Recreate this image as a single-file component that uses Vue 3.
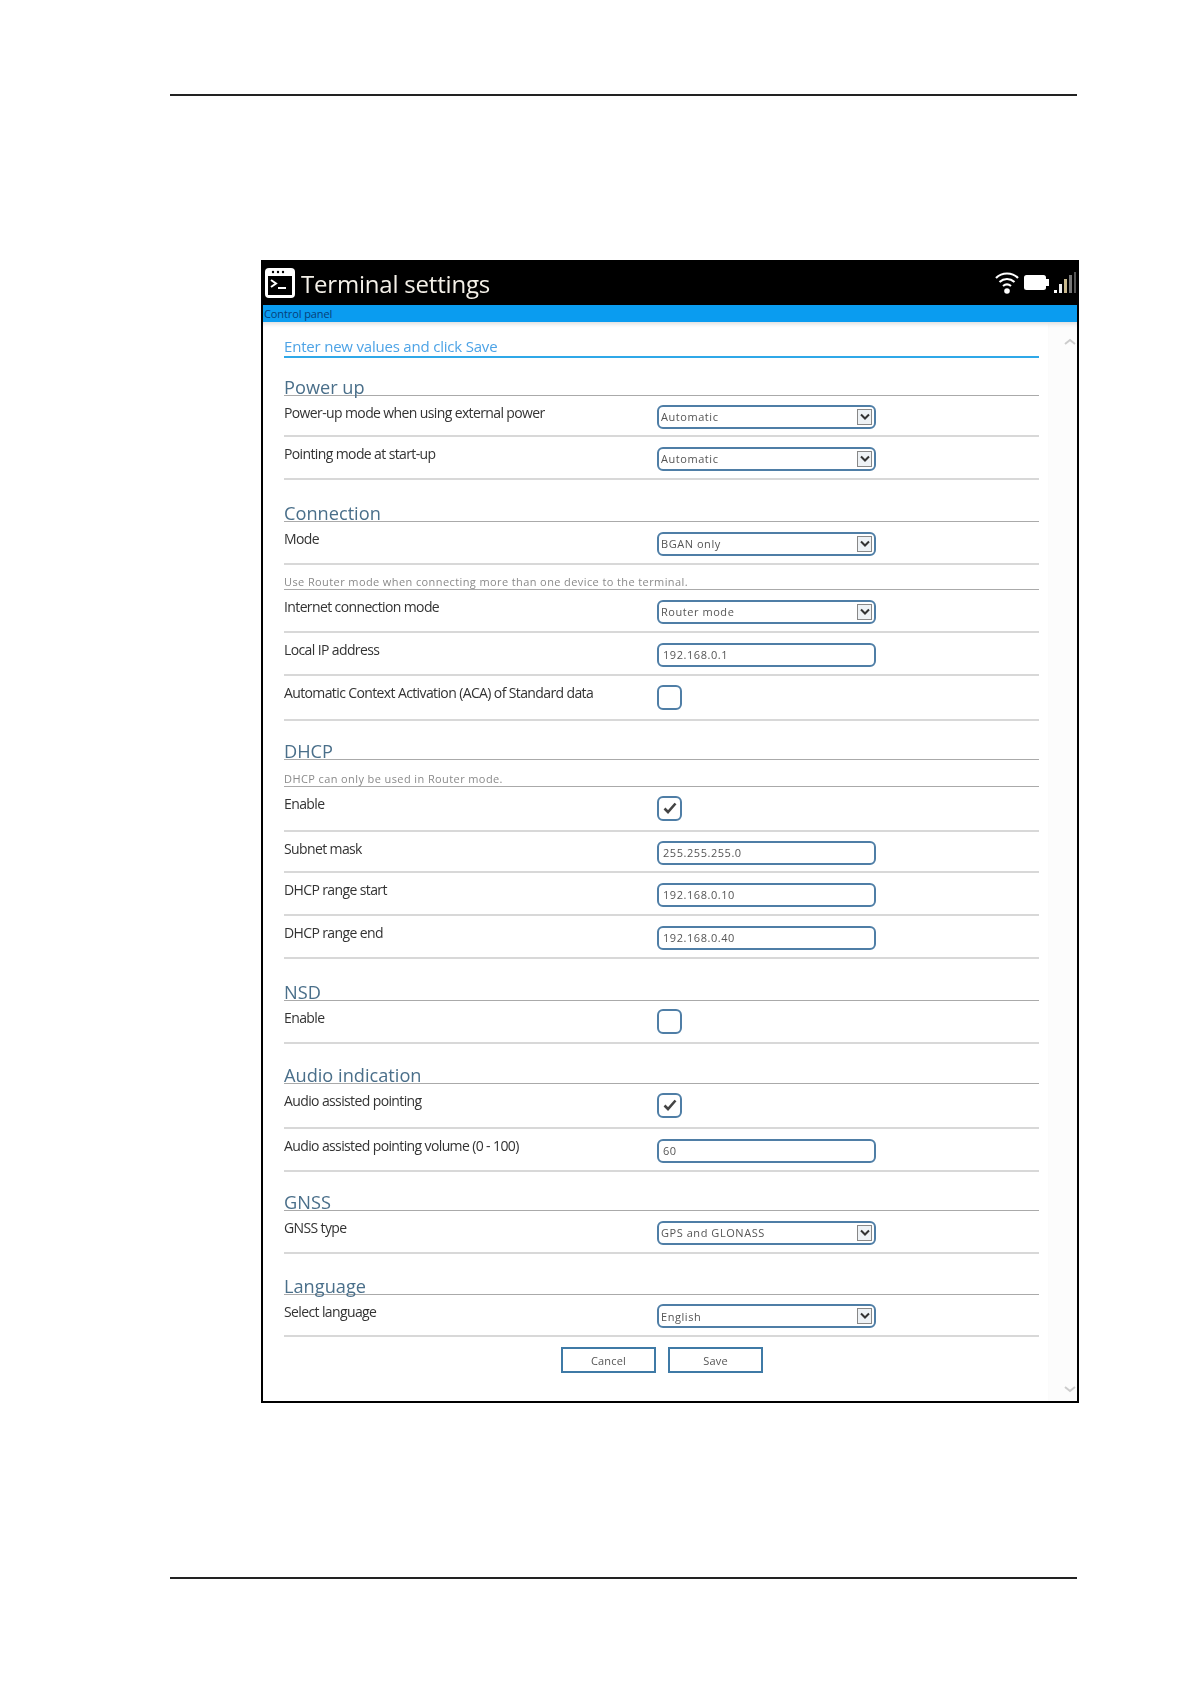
<script setup>
const sections = [
  { title: 'Power up', h: 38, rows: [
    { label: 'Power-up mode when using external power', type: 'select', value: 'Automatic', h: 41 },
    { label: 'Pointing mode at start-up', type: 'select', value: 'Automatic', h: 43 }
  ] },
  { title: 'Connection', h: 42, rows: [
    { label: 'Mode', type: 'select', value: 'BGAN only', h: 43 },
    { hint: 'Use Router mode when connecting more than one device to the terminal.', h: 25 },
    { label: 'Internet connection mode', type: 'select', value: 'Router mode', h: 43 },
    { label: 'Local IP address', type: 'input', value: '192.168.0.1', h: 43 },
    { label: 'Automatic Context Activation (ACA) of Standard data', type: 'check', value: false, h: 45 }
  ] },
  { title: 'DHCP', h: 39, rows: [
    { hint: 'DHCP can only be used in Router mode.', h: 27 },
    { label: 'Enable', type: 'check', value: true, h: 45 },
    { label: 'Subnet mask', type: 'input', value: '255.255.255.0', h: 41 },
    { label: 'DHCP range start', type: 'input', value: '192.168.0.10', h: 43 },
    { label: 'DHCP range end', type: 'input', value: '192.168.0.40', h: 43 }
  ] },
  { title: 'NSD', h: 42, rows: [
    { label: 'Enable', type: 'check', value: false, h: 43 }
  ] },
  { title: 'Audio indication', h: 40, rows: [
    { label: 'Audio assisted pointing', type: 'check', value: true, h: 45 },
    { label: 'Audio assisted pointing volume (0 - 100)', type: 'input', value: '60', h: 43 }
  ] },
  { title: 'GNSS', h: 39, rows: [
    { label: 'GNSS type', type: 'select', value: 'GPS and GLONASS', h: 43 }
  ] },
  { title: 'Language', h: 41, rows: [
    { label: 'Select language', type: 'select', value: 'English', h: 42 }
  ] }
]
</script>

<template>
  <div class="page">
    <div class="rule top-rule"></div>
    <div class="window">
      <header class="titlebar">
        <svg class="app-icon" width="32" height="32" viewBox="0 0 32 32">
          <rect x="1" y="1" width="30" height="30" rx="4" fill="#fff" />
          <circle cx="9" cy="5" r="1.2" fill="#000" /><circle cx="14" cy="5" r="1.2" fill="#000" /><circle cx="19" cy="5" r="1.2" fill="#000" />
          <rect x="4" y="9" width="24" height="19" fill="#000" />
          <path d="M7 13l5 3.5-5 3.5" fill="none" stroke="#fff" stroke-width="2" />
          <path d="M14 21h8" stroke="#fff" stroke-width="2" />
        </svg>
        <span class="title">Terminal settings</span>
        <div class="status">
          <svg width="24" height="26" viewBox="0 0 24 26">
            <path d="M1 8C7 2 17 2 23 8M4.500 12C9 8 15 8 19.500 12M8 16C10.500 14 13.500 14 16 16" fill="none" stroke="#fff" stroke-width="2.200" />
            <circle cx="12" cy="21" r="2.800" fill="#fff" />
          </svg>
          <svg width="25" height="16" viewBox="0 0 25 16">
            <rect x="0" y="0" width="22" height="15" rx="2.500" fill="#fff" />
            <rect x="22" y="4" width="3" height="7" fill="#fff" />
          </svg>
          <svg width="23" height="22" viewBox="0 0 23 22">
            <rect x="0" y="18" width="3" height="3" fill="#fff" />
            <rect x="5" y="12" width="3" height="9" fill="#eee" />
            <rect x="10" y="7" width="3" height="14" fill="#c9b98e" />
            <rect x="15" y="3" width="3" height="18" fill="#777" />
            <rect x="20" y="0" width="2" height="21" fill="#555" />
          </svg>
        </div>
      </header>
      <div class="crumb">Control panel</div>
      <div class="body">
        <main class="content">
          <div class="intro">Enter new values and click Save</div>
          <section v-for="s in sections" :key="s.title">
            <h2 class="heading" :style="{ height: s.h + 'px' }">{{ s.title }}</h2>
            <template v-for="(r, i) in s.rows" :key="i">
              <div v-if="r.hint" class="hint" :style="{ height: r.h + 'px' }">{{ r.hint }}</div>
              <div v-else class="row" :style="{ height: r.h + 'px' }">
                <div class="label">{{ r.label }}</div>
                <div class="control">
                  <div v-if="r.type === 'select'" class="field">
                    <span class="select-text">{{ r.value }}</span>
                    <span class="arrow">
                      <svg width="10" height="8" viewBox="0 0 10 8"><path d="M1 1.500l4 4 4-4" fill="none" stroke="#333" stroke-width="2" /></svg>
                    </span>
                  </div>
                  <div v-else-if="r.type === 'input'" class="field input">{{ r.value }}</div>
                  <div v-else class="check">
                    <svg v-if="r.value" width="16" height="14" viewBox="0 0 16 14"><path d="M2.500 7.500l3.500 3.500 7.500-8.500" fill="none" stroke="#444" stroke-width="2.600" /></svg>
                  </div>
                </div>
              </div>
            </template>
          </section>
          <div class="actions">
            <button class="btn" type="button">Cancel</button>
            <button class="btn" type="button">Save</button>
          </div>
        </main>
        <aside class="scrollbar">
          <svg width="12" height="8" viewBox="0 0 12 8"><path d="M1 6l5-4 5 4" fill="none" stroke="#ccc" stroke-width="2" /></svg>
          <svg width="12" height="8" viewBox="0 0 12 8"><path d="M1 2l5 4 5-4" fill="none" stroke="#ccc" stroke-width="2" /></svg>
        </aside>
      </div>
    </div>
    <div class="rule bottom-rule"></div>
  </div>
</template>

<style scoped>
.page {
  width: 1190px;
  height: 1684px;
  background: #fff;
  font-family: "Open Sans", "Noto Sans", sans-serif;
  overflow: hidden;
}
.rule {
  width: 907px;
  height: 2px;
  margin-left: 170px;
  background: #222;
}
.top-rule { margin-top: 94px; }
.bottom-rule { margin-top: 174px; }
.window {
  box-sizing: border-box;
  width: 818px;
  height: 1143px;
  margin: 164px 0 0 261px;
  border: 2px solid #000;
  border-top: 0;
  display: flex;
  flex-direction: column;
}
.titlebar {
  height: 45px;
  flex: none;
  background: #000;
  display: flex;
  align-items: center;
  padding-left: 1px;
  color: #f4f0e8;
  filter: blur(0.3px);
}
.title {
  font-size: 24px;
  margin-left: 5px;
  letter-spacing: -0.2px;
  line-height: 45px;
  position: relative;
  top: 1px;
}
.status {
  margin-left: auto;
  display: flex;
  align-items: center;
  gap: 5px;
  padding-right: 0;
}
.crumb {
  height: 17px;
  flex: none;
  background: #0a9cf0;
  color: #06407a;
  font-size: 11px;
  line-height: 17px;
  padding-left: 1px;
  letter-spacing: -0.1px;
}
.body {
  flex: 1;
  display: flex;
  min-height: 0;
  box-shadow: inset 0 5px 4px -3px #ddd;
}
.content {
  width: 755px;
  margin-left: 21px;
  filter: blur(0.4px);
}
.scrollbar {
  width: 29px;
  margin-left: auto;
  background: #fcfcfc;
  display: flex;
  flex-direction: column;
  justify-content: space-between;
  align-items: flex-end;
  padding: 16px 1px 8px 0;
  box-sizing: border-box;
  box-shadow: inset 0 5px 4px -3px #ddd;
}
.intro {
  box-sizing: border-box;
  height: 36px;
  border-bottom: 2px solid #2fa8e8;
  color: #4da3e6;
  font-size: 15px;
  line-height: 20px;
  padding-top: 14px;
  letter-spacing: -0.2px;
}
.heading {
  box-sizing: border-box;
  margin: 0;
  display: flex;
  align-items: flex-end;
  border-bottom: 1px solid #aaa;
  color: #4a6f8a;
  font-size: 18.2px;
  font-weight: 400;
  line-height: 16px;
}
.row {
  box-sizing: border-box;
  display: flex;
  border-bottom: 2px solid #d8d8d8;
}
.label {
  width: 373px;
  flex: none;
  padding-top: 7px;
  font-size: 14px;
  line-height: 20px;
  color: #333;
  letter-spacing: -0.62px;
  white-space: nowrap;
}
.control {
  display: flex;
  align-items: center;
  padding-top: 2px;
}
.field {
  box-sizing: border-box;
  width: 219px;
  height: 24px;
  border: 2px solid #4f7ea6;
  border-radius: 6px;
  display: flex;
  align-items: center;
  justify-content: space-between;
  font-size: 11px;
  color: #555;
  padding-left: 2px;
  letter-spacing: 0.55px;
}
.input { padding-left: 4px; }
.arrow {
  width: 15px;
  height: 16px;
  margin-right: 2px;
  border: 1px solid #888;
  background: #eef2f5;
  box-sizing: border-box;
  display: flex;
  align-items: center;
  justify-content: center;
}
.check {
  box-sizing: border-box;
  width: 25px;
  height: 25px;
  margin-top: -3px;
  border: 2px solid #4f7ea6;
  border-radius: 6px;
  display: flex;
  align-items: center;
  justify-content: center;
}
.hint {
  box-sizing: border-box;
  border-bottom: 1px solid #aaa;
  color: #8a8a8a;
  font-size: 11px;
  line-height: 14px;
  display: flex;
  align-items: flex-end;
  letter-spacing: 0.4px;
}
.actions {
  display: flex;
  justify-content: center;
  gap: 12px;
  padding-top: 10px;
  padding-left: 1px;
}
.btn {
  box-sizing: border-box;
  width: 95px;
  height: 26px;
  border: 2px solid #3f7aa6;
  background: #fff;
  color: #555;
  font-family: inherit;
  font-size: 11px;
  letter-spacing: 0.2px;
  padding: 0;
}
</style>

<style>
html, body { margin: 0; background: #fff; }
</style>
